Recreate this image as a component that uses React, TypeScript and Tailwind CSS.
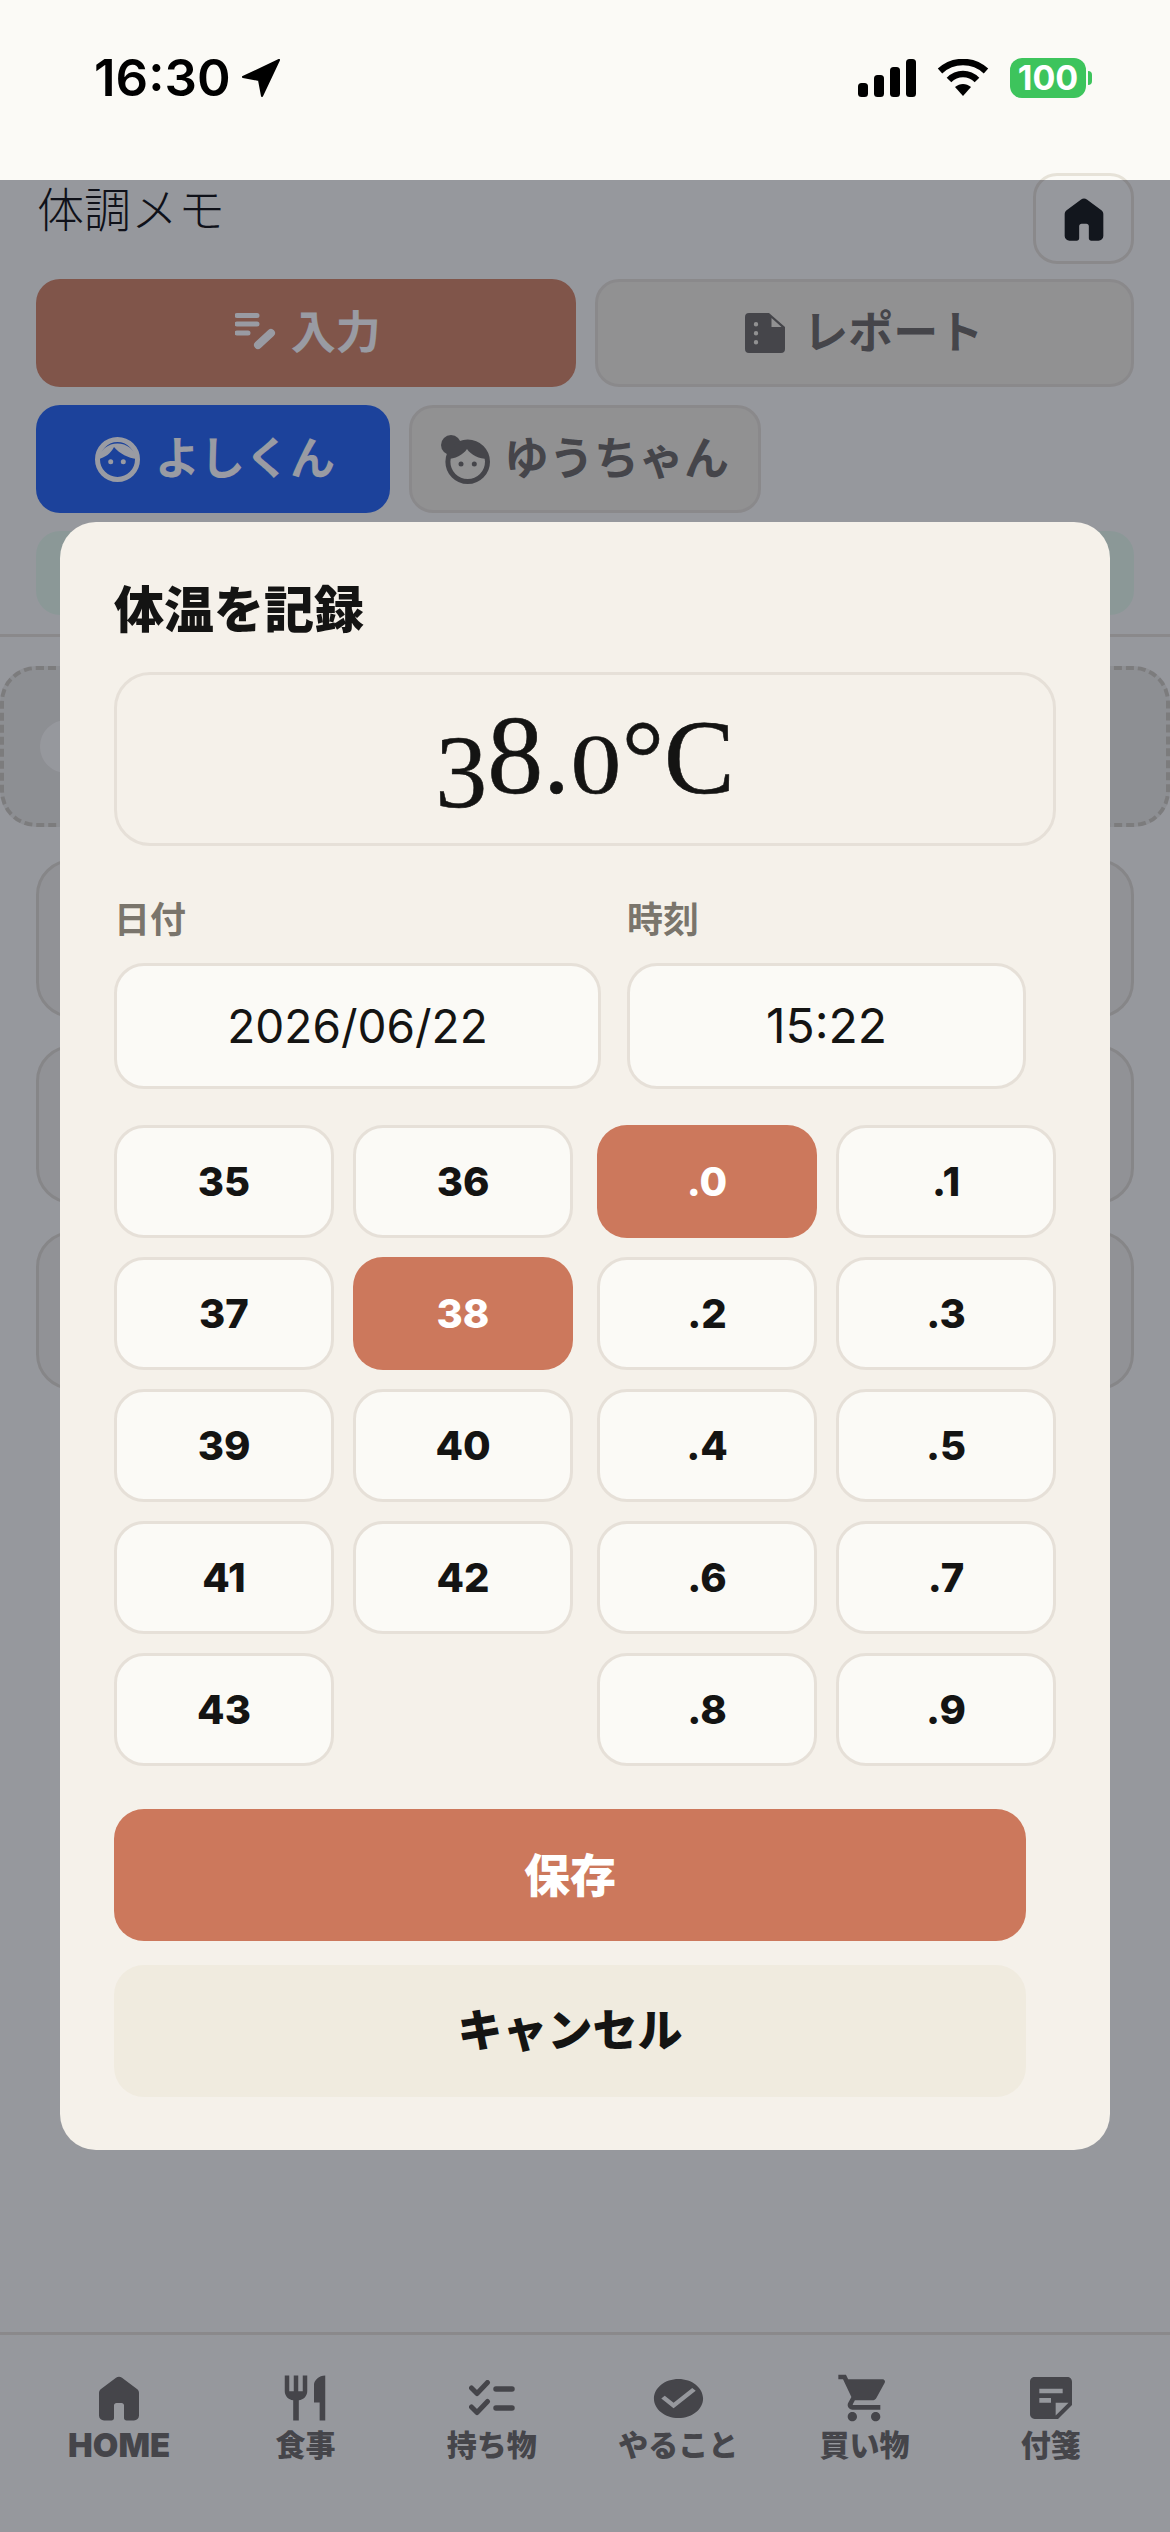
import { MdRestaurant, MdCheckCircle, MdShoppingCart, MdStickyNote2 } from "react-icons/md";

const sans = "font-['Inter','Noto_Sans_CJK_JP',sans-serif]";

const hours = ["35", "36", "37", "38", "39", "40", "41", "42", "43"];
const decimals = [".0", ".1", ".2", ".3", ".4", ".5", ".6", ".7", ".8", ".9"];

function HomeIcon({ className }: { className?: string }) {
  return (
    <svg viewBox="0 -960 960 960" fill="currentColor" className={className}>
      <path d="M160-200v-360q0-19 8.5-36t23.5-28l240-180q21-16 48-16t48 16l240 180q15 11 23.5 28t8.5 36v360q0 33-23.5 56.5T720-120H600q-17 0-28.5-11.5T560-160v-200q0-17-11.5-28.5T520-400h-80q-17 0-28.5 11.5T400-360v200q0 17-11.5 28.5T360-120H240q-33 0-56.5-23.5T160-200Z" />
    </svg>
  );
}

function EditNoteIcon() {
  return (
    <svg viewBox="0 0 42 42" className="h-[42px] w-[42px]" fill="none" stroke="currentColor" strokeLinecap="round">
      <path d="M2 3.5H22M2 12H22M2 21H13" strokeWidth="5" />
      <path d="M23 33L36 21" strokeWidth="8" />
    </svg>
  );
}

function ReportIcon() {
  return (
    <svg viewBox="0 0 40 40" className="h-[40px] w-[40px]" fill="currentColor">
      <path
        fillRule="evenodd"
        d="M4 0H24L40 14V36a4 4 0 0 1-4 4H4a4 4 0 0 1-4-4V4a4 4 0 0 1 4-4ZM26.5 5V14H36.5ZM11 9a2.2 2.2 0 1 0 0 4.4a2.2 2.2 0 1 0 0-4.4ZM11 18a2.2 2.2 0 1 0 0 4.4a2.2 2.2 0 1 0 0-4.4ZM11 27a2.2 2.2 0 1 0 0 4.4a2.2 2.2 0 1 0 0-4.4Z"
      />
    </svg>
  );
}

function BoyIcon() {
  return (
    <svg viewBox="0 0 45 45" className="h-[45px] w-[45px]" fill="currentColor">
      <circle cx="22.5" cy="22.5" r="20" fill="none" stroke="currentColor" strokeWidth="5" />
      <path d="M3 22A20 20 0 0 1 42 22C33 21 25 17 19 10C16 16 10 21 3 22Z" />
      <circle cx="15.7" cy="24.7" r="2.5" />
      <circle cx="28.3" cy="24.7" r="2.5" />
    </svg>
  );
}

function GirlIcon() {
  return (
    <svg viewBox="0 0 49 49" className="h-[49px] w-[49px]" fill="currentColor">
      <circle cx="10" cy="10" r="10" />
      <circle cx="26.7" cy="26.7" r="19.8" fill="none" stroke="currentColor" strokeWidth="5" />
      <path d="M6 24A21 21 0 0 1 47 24C38 24 30 20 26 14C22 20 14 24 6 24Z" />
      <circle cx="20" cy="29" r="2.5" />
      <circle cx="33.3" cy="29" r="2.5" />
    </svg>
  );
}

function ChecklistIcon() {
  return (
    <svg viewBox="0 0 46 36" className="h-[36px] w-[46px]" fill="none" stroke="currentColor" strokeLinecap="round" strokeLinejoin="round">
      <path d="M2.5 8L8 13.5L18.5 2.5M2.5 27L8 32.5L18.5 21.5" strokeWidth="5" />
      <path d="M27 9H43M27 28H43" strokeWidth="5.5" />
    </svg>
  );
}

const navItems = [
  { label: "HOME", size: "text-[33px]", icon: <HomeIcon className="h-[60px] w-[60px]" /> },
  { label: "食事", size: "text-[30px]", icon: <MdRestaurant className="h-[54px] w-[54px]" /> },
  { label: "持ち物", size: "text-[30px]", icon: <ChecklistIcon /> },
  { label: "やること", size: "text-[30px]", icon: <MdCheckCircle preserveAspectRatio="none" className="h-[47px] w-[59px]" /> },
  { label: "買い物", size: "text-[30px]", icon: <MdShoppingCart className="h-[56px] w-[56px]" /> },
  { label: "付箋", size: "text-[30px]", icon: <MdStickyNote2 className="h-[56px] w-[56px]" /> },
];

function StatusBar() {
  return (
    <div className="flex h-[180px] shrink-0 items-start justify-between bg-[#fbfaf6] pl-[94px] pr-[78px] pt-[50px]">
      <div className="flex items-center gap-[10px]">
        <span className="font-['Inter',sans-serif] text-[51px] font-semibold leading-[56px] text-black">16:30</span>
        <svg viewBox="0 0 40 40" className="h-[40px] w-[40px]" fill="black">
          <path d="M38 2 L2 19 L18 22 L21 38 Z" stroke="black" strokeWidth="2" strokeLinejoin="round" />
        </svg>
      </div>
      <div className="flex items-center gap-[21px] pt-[8px]">
        <svg viewBox="0 0 58 38" className="h-[38px] w-[58px]" fill="black">
          <rect x="0" y="24" width="10" height="14" rx="3.5" />
          <rect x="16" y="16" width="10" height="22" rx="3.5" />
          <rect x="32" y="8" width="10" height="30" rx="3.5" />
          <rect x="48" y="0" width="10" height="38" rx="3.5" />
        </svg>
        <svg viewBox="0 0 52 38" className="h-[38px] w-[52px]" fill="none" stroke="black">
          <path d="M3 12 C16 0 36 0 49 12" strokeWidth="6.5" />
          <path d="M12 21 C20 13 32 13 40 21" strokeWidth="6.5" />
          <path d="M18 28 L26 37 L34 28 C29 24 23 24 18 28 Z" fill="black" stroke="none" />
        </svg>
        <div className="flex items-center gap-[2px]">
          <div className="flex h-[40px] w-[76px] items-center justify-center rounded-[12px] bg-[#3dc45c] font-['Inter',sans-serif] text-[34px] font-bold leading-none text-white">
            100
          </div>
          <div className="h-[14px] w-[4px] rounded-r-full bg-[#3dc45c]" />
        </div>
      </div>
    </div>
  );
}

function Background() {
  return (
    <div className="flex flex-1 flex-col">
      <div className="flex items-start justify-between pl-[37px] pr-[36px]">
        <h1 className="mt-[3px] font-['Liberation_Serif','Noto_Sans_CJK_JP',serif] text-[47px] font-extralight leading-[56px] text-[#1a1a1a]">
          体調メモ
        </h1>
        <div className="-mt-[7px] flex h-[91px] w-[101px] items-center justify-center rounded-[24px] border-[3px] border-[#e6e2d8] bg-[#fbfaf6] text-[#1f2220]">
          <HomeIcon className="h-[58px] w-[58px]" />
        </div>
      </div>
      <div className="mt-[15px] grid grid-cols-2 gap-[19px] px-[36px]">
        <div className={`flex h-[108px] items-center justify-center gap-[14px] rounded-[24px] bg-[#d58a6b] pl-[4px] text-[45px] font-bold text-white ${sans}`}>
          <EditNoteIcon />
          入力
        </div>
        <div className={`flex h-[108px] items-center justify-center gap-[18px] rounded-[24px] border-[3px] border-[#e6e2d8] bg-[#f2eee3] text-[45px] font-bold text-[#73716c] ${sans}`}>
          <ReportIcon />
          レポート
        </div>
      </div>
      <div className="mt-[18px] flex gap-[19px] px-[36px]">
        <div className={`flex h-[108px] w-[354px] items-center justify-center gap-[15px] rounded-[24px] bg-[#2f6cf2] pl-[4px] text-[45px] font-bold text-white ${sans}`}>
          <BoyIcon />
          よしくん
        </div>
        <div className={`flex h-[108px] w-[352px] items-center justify-center gap-[14px] rounded-[24px] border-[3px] border-[#e6e2d8] bg-[#f2eee3] text-[45px] font-bold text-[#73716c] ${sans}`}>
          <GirlIcon />
          ゆうちゃん
        </div>
      </div>
      <div className="mx-[36px] mt-[18px] h-[84px] rounded-[24px] bg-[#e8fbec]" />
      <div className="mt-[19px] h-[3px] bg-[#e6e2d8]" />
      <div className="mt-[29px] flex h-[161px] items-start rounded-[36px] border-[4px] border-dashed border-[#cfcbc0] bg-[#ecebe5] pl-[36px] pt-[50px]">
        <div className="h-[53px] w-[200px] rounded-full bg-[#fbfaf6]" />
      </div>
      <div className="mt-[32px] flex flex-col gap-[27px] px-[36px]">
        <div className="h-[159px] rounded-[36px] border-[3px] border-[#e0dcd2] bg-[#f2f0ea]" />
        <div className="h-[159px] rounded-[36px] border-[3px] border-[#e0dcd2] bg-[#f2f0ea]" />
        <div className="h-[159px] rounded-[36px] border-[3px] border-[#e0dcd2] bg-[#f2f0ea]" />
      </div>
      <nav className="mt-auto grid h-[200px] grid-cols-6 border-t-[3px] border-[#e6e2d8] px-[26px] pt-[36px] text-[#73716c]">
        {navItems.map((item) => (
          <div key={item.label} className="flex flex-col items-center">
            <div className="flex h-[54px] items-center justify-center">{item.icon}</div>
            <span className={`font-black leading-[40px] ${item.size} ${sans}`}>{item.label}</span>
          </div>
        ))}
      </nav>
    </div>
  );
}

function PadButton({ label, active }: { label: string; active: boolean }) {
  return (
    <button
      className={`h-[113px] rounded-[30px] text-[40px] font-extrabold ${sans} ${
        active ? "bg-[#cc785c] text-white" : "border-[3px] border-[#e6e0d8] bg-[#fbfaf6] text-[#141413]"
      }`}
    >
      {label}
    </button>
  );
}

function Modal() {
  return (
    <div className="w-[1050px] rounded-[36px] bg-[#f5f1ea] px-[54px] pb-[53px] pt-[57px]">
      <h2 className={`text-[50px] font-black leading-[62px] text-[#141413] ${sans}`}>体温を記録</h2>
      <div className="mt-[31px] flex h-[174px] items-center justify-center rounded-[36px] border-[3px] border-[#e6e0d8] pt-[5px] text-[#141413]">
        <div className="font-['Liberation_Serif',serif] text-[106px] leading-none [-webkit-text-stroke:0.6px_#141413]">
          <span className="align-[-14px] text-[104px]">3</span>
          <span className="text-[112px]">8</span>
          <span>.</span>
          <span className="mx-[5px] inline-block scale-x-[1.2] text-[84px]">0</span>
          <span>°C</span>
        </div>
      </div>
      <div className="mt-[52px] flex gap-[26px]">
        <div className="w-[487px]">
          <label className={`block text-[36px] font-bold leading-[44px] text-[#7a756c] ${sans}`}>日付</label>
          <div className="mt-[21px] flex h-[126px] items-center justify-center rounded-[30px] border-[3px] border-[#e6e0d8] bg-[#fbfaf6] font-['Inter',sans-serif] text-[46px] text-[#141413]">
            2026/06/22
          </div>
        </div>
        <div className="w-[399px]">
          <label className={`block text-[36px] font-bold leading-[44px] text-[#7a756c] ${sans}`}>時刻</label>
          <div className="mt-[21px] flex h-[126px] items-center justify-center rounded-[30px] border-[3px] border-[#e6e0d8] bg-[#fbfaf6] font-['Inter',sans-serif] text-[48px] text-[#141413]">
            15:22
          </div>
        </div>
      </div>
      <div className="mt-[36px] flex gap-[24px]">
        <div className="grid flex-1 grid-cols-2 content-start gap-[19px]">
          {hours.map((h) => (
            <PadButton key={h} label={h} active={h === "38"} />
          ))}
        </div>
        <div className="grid flex-1 grid-cols-2 content-start gap-[19px]">
          {decimals.map((d) => (
            <PadButton key={d} label={d} active={d === ".0"} />
          ))}
        </div>
      </div>
      <button className={`mt-[43px] block h-[132px] w-[912px] rounded-[30px] bg-[#cc785c] text-[46px] font-black text-white ${sans}`}>保存</button>
      <button className={`mt-[24px] block h-[132px] w-[912px] rounded-[30px] bg-[#f0ebdf] text-[45px] font-black text-[#141413] ${sans}`}>キャンセル</button>
    </div>
  );
}

export default function App() {
  return (
    <div className="flex h-[2532px] w-[1170px] flex-col overflow-hidden bg-[#fbfaf6]">
      <StatusBar />
      <main className="relative flex flex-1 flex-col">
        <Background />
        <div className="absolute inset-0 flex items-start justify-center bg-[rgba(1,5,24,0.4)] pt-[342px]">
          <Modal />
        </div>
      </main>
    </div>
  );
}
